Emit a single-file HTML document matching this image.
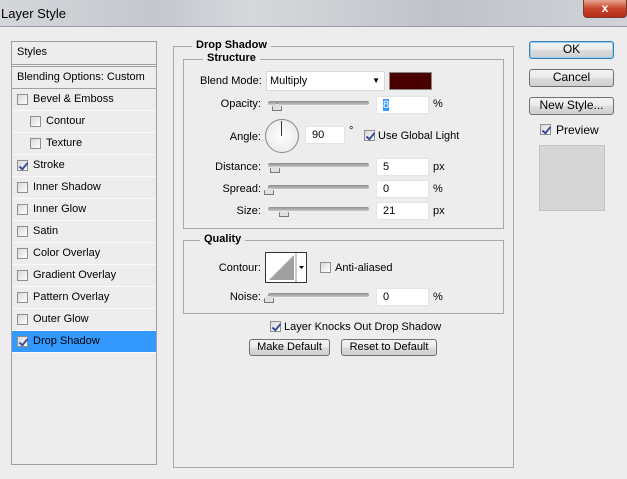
<!DOCTYPE html>
<html><head><style>
*{margin:0;padding:0;box-sizing:border-box}
body{width:627px;height:479px;background:#ededed;font-family:"Liberation Sans",sans-serif;font-size:11px;color:#000;position:relative;overflow:hidden}
.a{position:absolute;white-space:nowrap}
.title{left:0;top:0;width:627px;height:27px;background:linear-gradient(90deg,#d4d6da 0%,#c4c8cd 25%,#d6d8dc 40%,#bfc3c8 70%,#d0d3d7 100%);border-bottom:1px solid #9a9ea4}
.close{left:583px;top:0;width:44px;height:18px;background:linear-gradient(#e8a593,#c8452c 50%,#b32d17);border:1px solid #7a3a30;border-top:none;border-radius:0 0 4px 4px;color:#fff;font-weight:bold;font-size:12px;text-align:center;line-height:16px}
.panel{left:11px;top:41px;width:146px;height:424px;border:1px solid #a0a0a0;background:#ededed}
.row{position:absolute;left:0;width:144px;height:22px;border-bottom:1px solid #fafafa;line-height:21px}
.cb{position:absolute;width:11px;height:11px;border:1px solid #8f8f8f;background:linear-gradient(135deg,#d8d8d8,#fff)}
.cb.on::after{content:"";position:absolute;left:3px;top:0px;width:3px;height:7px;border:solid #3a4da0;border-width:0 2px 2px 0;transform:rotate(40deg)}
.box{border:1px solid #a8a8a8}
.lbl{font-weight:bold;background:#ededed;padding:0 4px}
.slider{position:absolute;height:4px;background:linear-gradient(#8d8d8d,#c8c8c8);border-radius:2px;width:101px}
.thumb{position:absolute;width:10px;height:8px;background:#e0e0e0;border:1px solid #777;clip-path:polygon(50% 0,100% 45%,100% 100%,0 100%,0 45%)}
.in{position:absolute;background:#fff;border:1px solid #e4e4e4;height:18px;line-height:16px;padding-left:6px}
.btn{position:absolute;border:1px solid #707070;border-radius:3px;background:linear-gradient(#f2f2f2 0%,#ebebeb 50%,#dcdcdc 51%,#cfcfcf 100%);text-align:center;font-size:12px;line-height:15px}
.r{text-align:right}
</style></head><body>
<div class="a title"></div>
<div class="a" style="left:1px;top:6px;font-size:13px;color:#000">Layer Style</div>
<div class="a close">x</div>

<div class="a panel">
<div class="row" style="top:0;padding-left:5px;border-bottom:3px double #a0a0a0;height:25px">Styles</div>
<div class="row" style="top:25px;padding-left:5px;border-bottom:1px solid #a0a0a0">Blending Options: Custom</div>
<div class="row" style="top:47px"><span class="cb" style="left:5px;top:5px"></span><span style="position:absolute;left:21px">Bevel &amp; Emboss</span></div>
<div class="row" style="top:69px"><span class="cb" style="left:18px;top:5px"></span><span style="position:absolute;left:34px">Contour</span></div>
<div class="row" style="top:91px"><span class="cb" style="left:18px;top:5px"></span><span style="position:absolute;left:34px">Texture</span></div>
<div class="row" style="top:113px"><span class="cb on" style="left:5px;top:5px"></span><span style="position:absolute;left:21px">Stroke</span></div>
<div class="row" style="top:135px"><span class="cb" style="left:5px;top:5px"></span><span style="position:absolute;left:21px">Inner Shadow</span></div>
<div class="row" style="top:157px"><span class="cb" style="left:5px;top:5px"></span><span style="position:absolute;left:21px">Inner Glow</span></div>
<div class="row" style="top:179px"><span class="cb" style="left:5px;top:5px"></span><span style="position:absolute;left:21px">Satin</span></div>
<div class="row" style="top:201px"><span class="cb" style="left:5px;top:5px"></span><span style="position:absolute;left:21px">Color Overlay</span></div>
<div class="row" style="top:223px"><span class="cb" style="left:5px;top:5px"></span><span style="position:absolute;left:21px">Gradient Overlay</span></div>
<div class="row" style="top:245px"><span class="cb" style="left:5px;top:5px"></span><span style="position:absolute;left:21px">Pattern Overlay</span></div>
<div class="row" style="top:267px"><span class="cb" style="left:5px;top:5px"></span><span style="position:absolute;left:21px">Outer Glow</span></div>
<div class="row" style="top:289px;background:#3399ff;border-bottom:1px solid #fafafa"><span class="cb on" style="left:5px;top:5px"></span><span style="position:absolute;left:21px">Drop Shadow</span></div>
</div>

<div class="a box" style="left:173px;top:46px;width:341px;height:422px"></div>
<div class="a lbl" style="left:192px;top:39px">Drop Shadow</div>
<div class="a box" style="left:183px;top:59px;width:321px;height:170px"></div>
<div class="a lbl" style="left:203px;top:52px">Structure</div>

<div class="a r" style="left:200px;top:75px;width:61px">Blend Mode:</div>
<div class="in" style="left:266px;top:71px;width:119px;height:20px;line-height:18px;padding-left:3px;border-color:#d8d8d8">Multiply<span style="position:absolute;right:4px;top:0;font-size:8px">▼</span></div>
<div class="a" style="left:389px;top:72px;width:43px;height:18px;background:#4a0000;border:1px solid #888"></div>

<div class="a r" style="left:200px;top:98px;width:61px">Opacity:</div>
<div class="slider" style="left:268px;top:101px"></div><div class="thumb" style="left:272px;top:103px"></div>
<div class="in" style="left:376px;top:96px;width:53px"><span style="background:#3399ff;color:#fff">8</span></div>
<div class="a" style="left:433px;top:98px">%</div>

<div class="a r" style="left:200px;top:131px;width:61px">Angle:</div>
<div class="a" style="left:265px;top:119px;width:34px;height:34px;border-radius:50%;border:1px solid #888;background:radial-gradient(#fff,#e4e4e4)"></div>
<div class="a" style="left:281px;top:121px;width:1px;height:15px;background:#333"></div>
<div class="in" style="left:305px;top:126px;width:40px">90</div>
<div class="a" style="left:349px;top:125px">°</div>
<div class="cb on a" style="left:364px;top:130px"></div>
<div class="a" style="left:378px;top:130px">Use Global Light</div>

<div class="a r" style="left:200px;top:161px;width:61px">Distance:</div>
<div class="slider" style="left:268px;top:163px"></div><div class="thumb" style="left:270px;top:165px"></div>
<div class="in" style="left:376px;top:158px;width:53px">5</div><div class="a" style="left:433px;top:161px">px</div>

<div class="a r" style="left:200px;top:183px;width:61px">Spread:</div>
<div class="slider" style="left:268px;top:185px"></div><div class="thumb" style="left:264px;top:187px"></div>
<div class="in" style="left:376px;top:180px;width:53px">0</div><div class="a" style="left:433px;top:183px">%</div>

<div class="a r" style="left:200px;top:205px;width:61px">Size:</div>
<div class="slider" style="left:268px;top:207px"></div><div class="thumb" style="left:279px;top:209px"></div>
<div class="in" style="left:376px;top:202px;width:53px">21</div><div class="a" style="left:433px;top:205px">px</div>

<div class="a box" style="left:183px;top:240px;width:321px;height:74px"></div>
<div class="a lbl" style="left:200px;top:233px">Quality</div>
<div class="a r" style="left:200px;top:262px;width:61px">Contour:</div>
<div class="a" style="left:265px;top:252px;width:42px;height:31px;border:1px solid #333;background:#fff">
<svg width="40" height="29" style="position:absolute;left:0;top:0"><polygon points="3,27 28,2 28,27" fill="#a0a0a0"/><line x1="30" y1="0" x2="30" y2="29" stroke="#999"/><polygon points="33,13 38,13 35.5,16" fill="#000"/></svg></div>
<div class="cb a" style="left:320px;top:262px"></div>
<div class="a" style="left:335px;top:262px">Anti-aliased</div>
<div class="a r" style="left:200px;top:291px;width:61px">Noise:</div>
<div class="slider" style="left:268px;top:293px"></div><div class="thumb" style="left:264px;top:295px"></div>
<div class="in" style="left:376px;top:288px;width:53px">0</div><div class="a" style="left:433px;top:291px">%</div>

<div class="cb on a" style="left:270px;top:321px"></div>
<div class="a" style="left:284px;top:321px">Layer Knocks Out Drop Shadow</div>
<div class="btn" style="left:249px;top:339px;width:81px;height:17px;font-size:11px">Make Default</div>
<div class="btn" style="left:341px;top:339px;width:96px;height:17px;font-size:11px">Reset to Default</div>

<div class="btn" style="left:529px;top:41px;width:85px;height:18px;border-color:#3c7fb1;box-shadow:inset 0 0 0 1px #8fd0f3">OK</div>
<div class="btn" style="left:529px;top:69px;width:85px;height:18px">Cancel</div>
<div class="btn" style="left:529px;top:97px;width:85px;height:18px">New Style...</div>
<div class="cb on a" style="left:540px;top:124px"></div>
<div class="a" style="left:556px;top:123px;font-size:12px">Preview</div>
<div class="a" style="left:539px;top:145px;width:66px;height:66px;background:#d6d6d6;border:1px solid #c4c4c4"></div>
</body></html>
